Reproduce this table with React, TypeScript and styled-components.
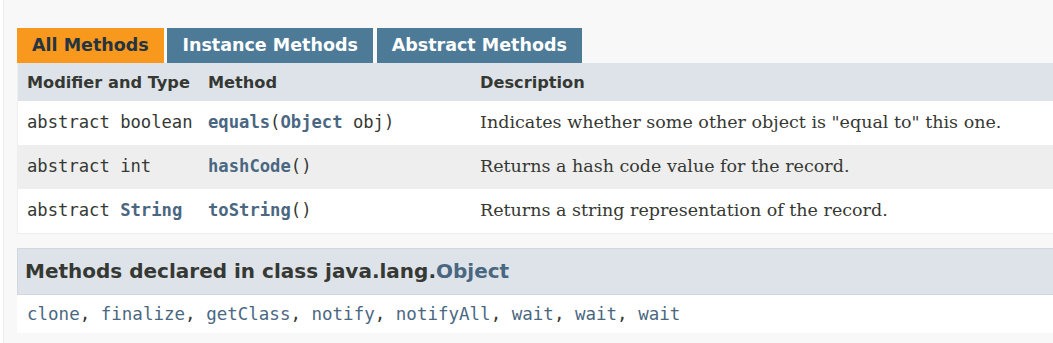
import React from 'react';
import styled, { createGlobalStyle } from 'styled-components';

const GlobalStyle = createGlobalStyle`
html, body {
  margin: 0;
  padding: 0;
  background: #fff;
  overflow: hidden;
  font-family: 'DejaVu Sans', 'Liberation Sans', Arial, sans-serif;
  color: #353833;
}
`

const Section = styled.section`
margin-left: 3px;
border-left: 1px solid #ededed;
background: #f8f8f8;
padding: 28px 0 11px 13px;
width: 1200px;
min-height: 343px;
box-sizing: border-box;
`

const Tabs = styled.div`
display: flex;
gap: 3.75px;
`

const Tab = styled.button<{ $active?: boolean }>`
height: 35px;
padding: 0 15px 1px;
border: none;
font-family: 'DejaVu Sans', sans-serif;
font-weight: bold;
font-size: 17.5px;
background: ${p => (p.$active ? '#f8981d' : '#4d7a97')};
color: ${p => (p.$active ? '#253441' : '#ffffff')};
`

const Table = styled.div`
display: grid;
grid-template-columns: 181px 272px 1fr;
border-left: 1px solid #eee;
border-right: 1px solid #eee;
border-bottom: 1px solid #eee;
`

const HeadCell = styled.div`
background: #dee3e9;
height: 38px;
box-sizing: border-box;
padding: 9px 4px 0 9px;
line-height: 22px;
font-weight: bold;
font-size: 16.2px;
white-space: nowrap;
`

const Cell = styled.div<{ $odd?: boolean; $desc?: boolean }>`
background: ${p => (p.$odd ? '#eeeeee' : '#ffffff')};
height: 44px;
box-sizing: border-box;
padding: 9px 4px 0 9px;
line-height: 24px;
white-space: nowrap;
font-family: ${p =>
  p.$desc ? "'DejaVu Serif', Georgia, serif" : "'DejaVu Sans Mono', monospace"};
font-size: ${p => (p.$desc ? '17.5px' : '17.2px')};
`

const Link = styled.a<{ $bold?: boolean }>`
color: #4a6782;
font-weight: ${p => (p.$bold ? 'bold' : 'normal')};
text-decoration: none;
`

const Inherited = styled.div`
margin-top: 14px;
`

const InheritedTitle = styled.h3`
margin: 0;
height: 47px;
box-sizing: border-box;
background: #dee3e9;
border: 1px solid #d0d9e0;
padding: 10px 7px 0;
line-height: 24px;
font-size: 20px;
font-weight: bold;
white-space: nowrap;
`

const InheritedList = styled.div`
background: #fff;
height: 38px;
padding: 0 10px;
line-height: 38px;
font-family: 'DejaVu Sans Mono', monospace;
font-size: 17.5px;
white-space: nowrap;
`

const rows = [
  {
    type: <>abstract boolean</>,
    method: <><Link $bold>equals</Link>(<Link $bold>Object</Link> obj)</>,
    desc: 'Indicates whether some other object is "equal to" this one.',
  },
  {
    type: <>abstract int</>,
    method: <><Link $bold>hashCode</Link>()</>,
    desc: 'Returns a hash code value for the record.',
  },
  {
    type: <>abstract <Link $bold>String</Link></>,
    method: <><Link $bold>toString</Link>()</>,
    desc: 'Returns a string representation of the record.',
  },
]

const objectMethods = ['clone', 'finalize', 'getClass', 'notify', 'notifyAll', 'wait', 'wait', 'wait']

export default function App() {
  return (
    <>
      <GlobalStyle />
      <Section>
        <Tabs>
          <Tab $active>All Methods</Tab>
          <Tab>Instance Methods</Tab>
          <Tab>Abstract Methods</Tab>
        </Tabs>
        <Table>
          <HeadCell>Modifier and Type</HeadCell>
          <HeadCell>Method</HeadCell>
          <HeadCell>Description</HeadCell>
          {rows.map((row, i) => (
            <React.Fragment key={i}>
              <Cell $odd={i % 2 === 1}>{row.type}</Cell>
              <Cell $odd={i % 2 === 1}>{row.method}</Cell>
              <Cell $odd={i % 2 === 1} $desc>{row.desc}</Cell>
            </React.Fragment>
          ))}
        </Table>
        <Inherited>
          <InheritedTitle>Methods declared in class java.lang.<Link $bold>Object</Link></InheritedTitle>
          <InheritedList>
            {objectMethods.map((m, i) => (
              <React.Fragment key={i}>
                {i > 0 && ', '}
                <Link>{m}</Link>
              </React.Fragment>
            ))}
          </InheritedList>
        </Inherited>
      </Section>
    </>
  )
}
